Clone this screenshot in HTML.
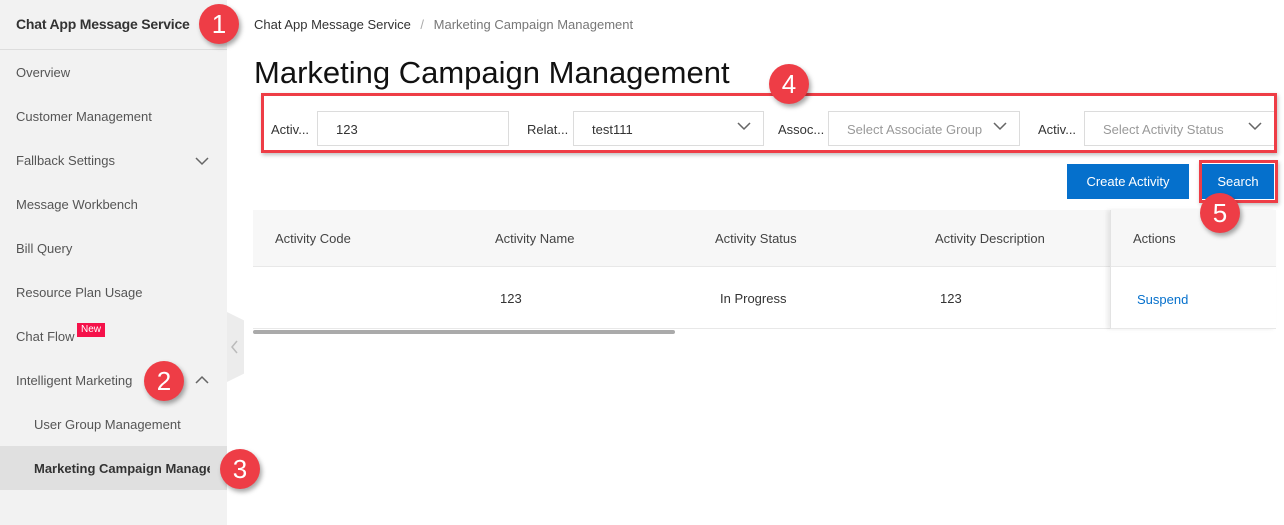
<!DOCTYPE html>
<html><head><style>
*{box-sizing:border-box;margin:0;padding:0}
body{width:1284px;height:525px;position:relative;overflow:hidden;background:#fff;font-family:"Liberation Sans",sans-serif;font-size:13px;color:#333}
.a{position:absolute}
.side{left:0;top:0;width:227px;height:525px;background:#f2f2f2}
.nav{left:16px;color:#555;font-size:13px}
.circ{width:40px;height:40px;border-radius:50%;background:#ee3d46;color:#fff;font-size:26px;text-align:center;line-height:40px;box-shadow:2px 3px 5px rgba(0,0,0,.35)}
.inp{height:35px;border:1px solid #dcdcdc;background:#fff;top:111px}
.lbl{top:122px;color:#333}
.ph{color:#999}
.chev{position:absolute;right:12px;top:9px}
.th{top:231px;color:#444}
.td{top:291px;color:#333}
</style></head><body>
<div class="a side"></div>
<div class="a" style="left:0;top:49px;width:227px;height:1px;background:#ddd"></div>
<div class="a" style="left:16px;top:16px;font-size:14px;font-weight:bold;color:#333;letter-spacing:-0.2px">Chat App Message Service</div>
<div class="a nav" style="top:65px">Overview</div>
<div class="a nav" style="top:109px">Customer Management</div>
<div class="a nav" style="top:153px">Fallback Settings</div>
<svg class="a" style="left:195px;top:156px" width="14" height="10"><path d="M1 2l6 6 6-6" stroke="#666" stroke-width="1.5" fill="none"/></svg>
<div class="a nav" style="top:197px">Message Workbench</div>
<div class="a nav" style="top:241px">Bill Query</div>
<div class="a nav" style="top:285px">Resource Plan Usage</div>
<div class="a nav" style="top:329px">Chat Flow</div>
<div class="a" style="left:77px;top:323px;background:#f5124a;color:#fff;font-size:10px;padding:1px 4px;line-height:12px">New</div>
<div class="a nav" style="top:373px">Intelligent Marketing</div>
<svg class="a" style="left:195px;top:375px" width="14" height="10"><path d="M1 8l6-6 6 6" stroke="#666" stroke-width="1.5" fill="none"/></svg>
<div class="a nav" style="left:34px;top:417px">User Group Management</div>
<div class="a" style="left:0;top:446px;width:227px;height:44px;background:#e0e0e0"></div>
<div class="a" style="left:34px;top:461px;font-weight:bold;color:#333;white-space:nowrap;width:176px;overflow:hidden">Marketing Campaign Management</div>
<div class="a" style="left:227px;top:312px;width:17px;height:70px;background:#ececec;clip-path:polygon(0 0,100% 12%,100% 88%,0 100%)"></div>
<svg class="a" style="left:230px;top:340px" width="10" height="14"><path d="M7 1l-5 6 5 6" stroke="#bbb" stroke-width="1.5" fill="none"/></svg>

<div class="a" style="left:254px;top:17px;color:#333">Chat App Message Service <span style="color:#aaa;margin:0 6px">/</span> <span style="color:#777">Marketing Campaign Management</span></div>
<div class="a" style="left:254px;top:55px;font-size:31px;color:#111">Marketing Campaign Management</div>

<div class="a lbl" style="left:271px">Activ...</div>
<div class="a inp" style="left:317px;width:192px;padding:10px 18px">123</div>
<div class="a lbl" style="left:527px">Relat...</div>
<div class="a inp" style="left:573px;width:191px;padding:10px 18px">test111<svg class="chev" width="14" height="10"><path d="M1 2l6 6 6-6" stroke="#666" stroke-width="1.5" fill="none"/></svg></div>
<div class="a lbl" style="left:778px">Assoc...</div>
<div class="a inp ph" style="left:828px;width:192px;padding:10px 18px">Select Associate Group<svg class="chev" width="14" height="10"><path d="M1 2l6 6 6-6" stroke="#666" stroke-width="1.5" fill="none"/></svg></div>
<div class="a lbl" style="left:1038px">Activ...</div>
<div class="a inp ph" style="left:1084px;width:191px;padding:10px 18px">Select Activity Status<svg class="chev" width="14" height="10"><path d="M1 2l6 6 6-6" stroke="#666" stroke-width="1.5" fill="none"/></svg></div>
<div class="a" style="left:261px;top:93px;width:1016px;height:60px;border:3px solid #ee3d46;box-shadow:1px 2px 4px rgba(0,0,0,.25)"></div>

<div class="a" style="left:1067px;top:164px;width:122px;height:35px;background:#0570cc;color:#fff;text-align:center;line-height:35px">Create Activity</div>
<div class="a" style="left:1202px;top:164px;width:72px;height:35px;background:#0570cc;color:#fff;text-align:center;line-height:35px">Search</div>
<div class="a" style="left:1199px;top:160px;width:79px;height:43px;border:3px solid #ee3d46;box-shadow:1px 2px 4px rgba(0,0,0,.25)"></div>

<div class="a" style="left:253px;top:210px;width:1023px;height:57px;background:#f7f7f7;border-bottom:1px solid #e8e8e8"></div>
<div class="a" style="left:253px;top:328px;width:1023px;height:1px;background:#e8e8e8"></div>
<div class="a" style="left:1110px;top:210px;width:166px;height:119px;box-shadow:-3px 0 4px rgba(0,0,0,.08);border-left:1px solid #e3e3e3"></div>
<div class="a th" style="left:275px">Activity Code</div>
<div class="a th" style="left:495px">Activity Name</div>
<div class="a th" style="left:715px">Activity Status</div>
<div class="a th" style="left:935px">Activity Description</div>
<div class="a th" style="left:1133px">Actions</div>
<div class="a td" style="left:500px">123</div>
<div class="a td" style="left:720px">In Progress</div>
<div class="a td" style="left:940px">123</div>
<div class="a td" style="left:1137px;top:292px;color:#0570cc">Suspend</div>
<div class="a" style="left:253px;top:330px;width:422px;height:4px;border-radius:2px;background:#aaa"></div>

<div class="a circ" style="left:199px;top:4px">1</div>
<div class="a circ" style="left:144px;top:361px">2</div>
<div class="a circ" style="left:220px;top:449px">3</div>
<div class="a circ" style="left:769px;top:64px">4</div>
<div class="a circ" style="left:1200px;top:193px">5</div>
</body></html>
